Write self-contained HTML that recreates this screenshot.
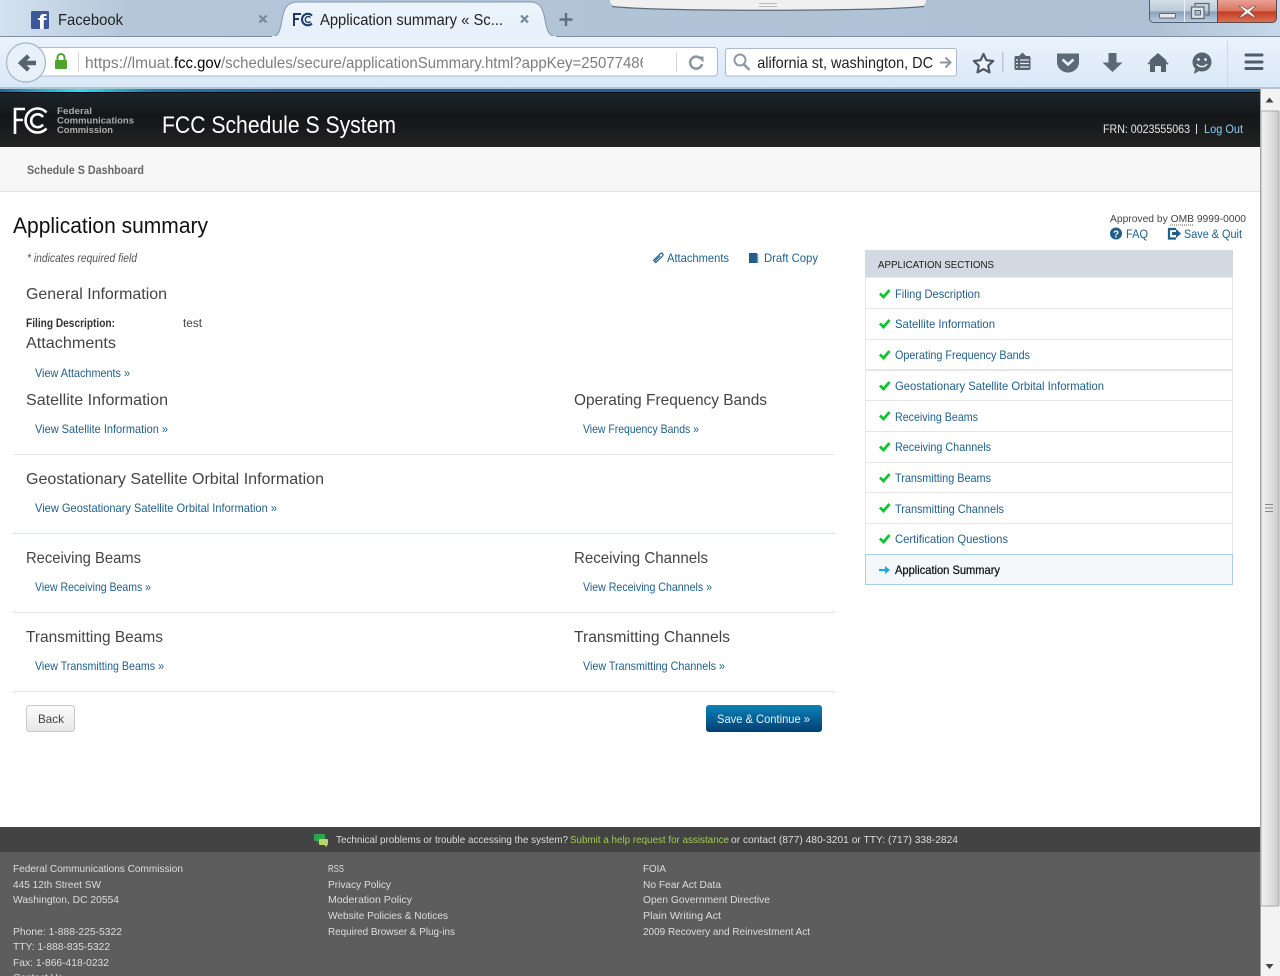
<!DOCTYPE html>
<html><head><meta charset="utf-8"><title>Application summary</title>
<style>
html,body{margin:0;padding:0;width:1280px;height:976px;overflow:hidden;background:#fff}
svg{display:block;position:absolute;left:0;top:0}
text{font-family:"Liberation Sans",sans-serif;white-space:pre}
.ui{fill:#222;font-size:16px}
.h{fill:#444;font-size:16px}
.l{fill:#1f5f8b;font-size:12px}
.f{fill:#ddd;font-size:10.5px}
</style></head><body>
<svg width="1280" height="976" viewBox="0 0 1280 976" xmlns="http://www.w3.org/2000/svg">
<defs>
<linearGradient id="tb" x1="0" x2="1" y1="0" y2="0"><stop offset="0" stop-color="#d3e2f0"/><stop offset=".1" stop-color="#b4c6d8"/><stop offset=".9" stop-color="#aec1d4"/><stop offset="1" stop-color="#c6d9ea"/></linearGradient>
<linearGradient id="nv" x1="0" x2="0" y1="0" y2="1"><stop offset="0" stop-color="#ebf3fc"/><stop offset="1" stop-color="#d9e7f6"/></linearGradient>
<linearGradient id="hd" x1="0" x2="0" y1="0" y2="1"><stop offset="0" stop-color="#1b252b"/><stop offset=".45" stop-color="#141617"/><stop offset="1" stop-color="#232323"/></linearGradient>
<linearGradient id="ln" x1="0" x2="1" y1="0" y2="0"><stop offset="0" stop-color="#1b6a90"/><stop offset=".03" stop-color="#2aa6c4"/><stop offset=".062" stop-color="#2de0f0"/><stop offset=".12" stop-color="#1f7fa6"/><stop offset=".22" stop-color="#1a6790"/><stop offset="1" stop-color="#1a6790"/></linearGradient>
<linearGradient id="btn" x1="0" x2="0" y1="0" y2="1"><stop offset="0" stop-color="#0a83b9"/><stop offset="1" stop-color="#023f73"/></linearGradient>
<linearGradient id="bk" x1="0" x2="0" y1="0" y2="1"><stop offset="0" stop-color="#fdfdfd"/><stop offset="1" stop-color="#e6e6e6"/></linearGradient>
<linearGradient id="min" x1="0" x2="0" y1="0" y2="1"><stop offset="0" stop-color="#d5e0ea"/><stop offset=".5" stop-color="#bccbd9"/><stop offset=".55" stop-color="#8ba2b8"/><stop offset="1" stop-color="#b9cde0"/></linearGradient>
<linearGradient id="cl" x1="0" x2="0" y1="0" y2="1"><stop offset="0" stop-color="#eda69b"/><stop offset=".5" stop-color="#d8735f"/><stop offset=".55" stop-color="#c43c22"/><stop offset="1" stop-color="#d9735a"/></linearGradient>
<linearGradient id="sb" x1="0" x2="1" y1="0" y2="0"><stop offset="0" stop-color="#f1f1f1"/><stop offset=".5" stop-color="#e2e2e2"/><stop offset="1" stop-color="#c9c9c9"/></linearGradient>
<linearGradient id="tab" x1="0" x2="0" y1="0" y2="1"><stop offset="0" stop-color="#edf4fb"/><stop offset="1" stop-color="#e6f0fb"/></linearGradient>
<clipPath id="uc"><rect x="80" y="48" width="563" height="28"/></clipPath>
<clipPath id="sc"><rect x="757" y="48" width="178" height="28"/></clipPath>
</defs>

<!-- browser chrome -->
<rect width="1280" height="37" fill="url(#tb)"/>
<rect y="36" width="1280" height="1" fill="#7890a6"/>
<rect y="37" width="1280" height="51" fill="url(#nv)"/>
<rect y="87" width="1280" height="2" fill="#b3c6d8"/>
<rect y="89" width="1280" height="3" fill="url(#ln)"/>
<rect y="92" width="1280" height="1" fill="#05090c"/>

<!-- tabs -->
<path d="M272 37C279 36 280 31 282 20 284 8 287 3 296 2H532C540 3 543 8 545 20 547 31 549 36 556 37Z" fill="url(#tab)" stroke="#8298ae"/>
<rect x="272" y="36" width="284" height="2" fill="#e8f1fb"/>
<rect x="31" y="11" width="18" height="18" rx="1.5" fill="#3b5998"/>
<text x="37.500" y="29" font-size="20" font-weight="700" fill="#fff" textLength="9" lengthAdjust="spacingAndGlyphs">f</text>
<text class="ui" x="58" y="25" textLength="65" lengthAdjust="spacingAndGlyphs">Facebook</text>
<path d="M259.500 15.500l7 7M266.500 15.500l-7 7" stroke="#77889a" stroke-width="2.200"/>
<g fill="none" stroke="#1d3a66" stroke-width="2"><path d="M294 26V14h7M294 19h5"/><path d="M312 15.500a5.800 5.800 0 1 0 0 8"/><path d="M310.500 17.500a3 3 0 1 0 0 4" stroke-width="1.400"/></g>
<text class="ui" x="320" y="25" textLength="183" lengthAdjust="spacingAndGlyphs">Application summary « Sc...</text>
<path d="M521 15.500l7 7M528 15.500l-7 7" stroke="#77889a" stroke-width="2.200"/>
<path d="M566 13v13M559.500 19.500h13" stroke="#5e7080" stroke-width="2.400"/>

<!-- tabs overflow grip -->
<path d="M610 0H926C926 4 924 6 920 7 870 11 660 11 618 7 612 6 610 4 610 0Z" fill="#f0f0f0"/>
<path d="M612 6.500C660 11.500 870 11.500 924 6.500" fill="none" stroke="#5f6c78" stroke-width="1.200"/>
<path d="M759 3.500h18M759 6.500h18" stroke="#bbb"/>

<!-- window controls -->
<path d="M1149.500 -1H1217.500V22.500H1153.500a4 4 0 0 1-4-4Z" fill="url(#min)" stroke="#4f6073"/>
<path d="M1184.500 0v22" stroke="#eef2f6"/>
<rect x="1159.500" y="13.500" width="16" height="4.500" rx="1" fill="#e8e8e8" stroke="#5b6b7a"/>
<path d="M1195 6V3.500h14V15h-3.500" fill="none" stroke="#5b6b7a" stroke-width="1.300"/>
<rect x="1191.500" y="7" width="12.500" height="11.500" fill="#dde4ea" stroke="#5b6b7a" stroke-width="1.300"/>
<rect x="1195" y="10.500" width="5.500" height="4.500" fill="#aebccb" stroke="#5b6b7a"/>
<path d="M1217.500 -1H1276.500V18.500a4 4 0 0 1-4 4H1217.500Z" fill="url(#cl)" stroke="#5e4a4a"/>
<path d="M1242 6l5.500 3.500 5.500-3.500h3l-6 5.500 6 5.500h-3l-5.500-3.500-5.500 3.500h-3l6-5.500-6-5.500Z" fill="#f2f2f2" stroke="#6c4a45" stroke-width=".6"/>

<!-- url bar -->
<path d="M30 47.500H714.500a3 3 0 0 1 3 3V73a3 3 0 0 1-3 3H30Z" fill="#fff" stroke="#a9bccf"/>
<circle cx="26" cy="62.500" r="19.500" fill="#e8f0f9" stroke="#a4b6c8" stroke-width="1.200"/>
<path d="M36 63H22M28.500 56l-7.500 7 7.500 7" fill="none" stroke="#55636f" stroke-width="4.400"/>
<rect x="55" y="60" width="12" height="9" rx="1" fill="#4fa42e"/>
<path d="M57.500 60v-2.500a3.500 3.500 0 0 1 7 0V60" fill="none" stroke="#4fa42e" stroke-width="2"/>
<rect x="78" y="52" width="1" height="20" fill="#cfd6dd"/>
<text x="85" y="68" font-size="16" fill="#7d7d7d" textLength="89" lengthAdjust="spacingAndGlyphs">https://lmuat.</text>
<text x="174" y="68" font-size="16" fill="#000" textLength="47" lengthAdjust="spacingAndGlyphs">fcc.gov</text>
<text x="221" y="68" font-size="16" fill="#7d7d7d" clip-path="url(#uc)" textLength="427" lengthAdjust="spacingAndGlyphs">/schedules/secure/applicationSummary.html?appKey=25077486</text>
<rect x="676" y="52" width="1" height="20" fill="#cfd6dd"/>
<path d="M700.500 58.500a6 6 0 1 0 1.500 5.500" fill="none" stroke="#8a97a3" stroke-width="2.600"/>
<path d="M697.500 56.500h6v6Z" fill="#8a97a3"/>

<!-- search bar -->
<rect x="725.500" y="48.500" width="231" height="27.500" rx="2" fill="#fff" stroke="#a9bccf"/>
<circle cx="740" cy="60" r="5.500" fill="none" stroke="#8e9aa6" stroke-width="2"/>
<path d="M744 64.500l5.500 5.500" stroke="#8e9aa6" stroke-width="2.600"/>
<text class="ui" x="750" y="68" clip-path="url(#sc)" textLength="183" lengthAdjust="spacingAndGlyphs">california st, washington, DC</text>
<path d="M940 62.500h9M945.500 57.500l5 5-5 5" fill="none" stroke="#8b99a6" stroke-width="2"/>

<!-- toolbar icons -->
<path d="M983.500 54l2.900 6.200 6.800.8-5 4.700 1.300 6.700-6-3.300-6 3.300 1.300-6.700-5-4.700 6.800-.8Z" fill="#eef4fb" stroke="#4a5965" stroke-width="2.200" stroke-linejoin="round"/>
<rect x="1002" y="52" width="1.500" height="20" fill="#b9c6d3"/>
<rect x="1014.500" y="56" width="16" height="14" rx="1.500" fill="#56646f"/>
<path d="M1019 56l3.500-3.500 3.500 3.500Z" fill="#56646f"/>
<path d="M1020 60h9M1020 63.500h9M1020 67h9M1016 60h2M1016 63.500h2M1016 67h2" stroke="#e4edf7" stroke-width="1.200"/>
<path d="M1057 53.500h22v8.500c0 6-5 10.500-11 10.500s-11-4.500-11-10.500Z" fill="#5b6a76"/>
<path d="M1062.500 59.500l5.500 5 5.500-5" fill="none" stroke="#e8f0f9" stroke-width="2.600"/>
<path d="M1108.500 53h8v9.500h6l-10 9.500-10-9.500h6Z" fill="#5b6a76"/>
<path d="M1158 54l-10.500 9.500.9 1.200 1.600-1.300V72h5v-6h6v6h5v-8.600l1.600 1.300.9-1.200Z" fill="#55636f"/>
<path d="M1150 61l8-7 8 7" fill="none" stroke="#55636f" stroke-width="1.500"/>
<circle cx="1202" cy="62" r="9.500" fill="#56646f"/>
<path d="M1195 69l-1 5 5-3Z" fill="#56646f"/>
<circle cx="1198.500" cy="59.500" r="1.400" fill="#e8f0f9"/><circle cx="1205.500" cy="59.500" r="1.400" fill="#e8f0f9"/>
<path d="M1197 64c2 3.500 8 3.500 10 0" fill="none" stroke="#e8f0f9" stroke-width="1.600"/>
<rect x="1227" y="40" width="1" height="46" fill="#ccd9e6"/>
<path d="M1246 55h16M1246 62h16M1246 68.500h16" stroke="#4e5c68" stroke-width="3" stroke-linecap="round"/>

<!-- site header -->
<rect y="93" width="1260" height="54" fill="url(#hd)"/>
<g fill="none" stroke="#fff" stroke-width="2.600"><path d="M15 134V109h10M15 120h8"/><path d="M46.500 112.500a12 12 0 1 0 0 16"/><path d="M43 117a6.500 6.500 0 1 0 0 7.500"/></g>
<text x="57" y="114" font-size="9.500" font-weight="700" fill="#aaa" textLength="35" lengthAdjust="spacingAndGlyphs">Federal</text>
<text x="57" y="123.500" font-size="9.500" font-weight="700" fill="#aaa" textLength="77" lengthAdjust="spacingAndGlyphs">Communications</text>
<text x="57" y="133" font-size="9.500" font-weight="700" fill="#aaa" textLength="56" lengthAdjust="spacingAndGlyphs">Commission</text>
<text x="162" y="133" font-size="24" fill="#fff" textLength="234" lengthAdjust="spacingAndGlyphs">FCC Schedule S System</text>
<text x="1103" y="133" font-size="11.500" fill="#e8e8e8" textLength="87" lengthAdjust="spacingAndGlyphs">FRN: 0023555063</text>
<rect x="1196" y="124" width="1" height="10" fill="#ddd"/>
<text x="1204" y="133" font-size="11.500" fill="#8fcbef" textLength="39" lengthAdjust="spacingAndGlyphs">Log Out</text>

<!-- nav strip -->
<rect y="147" width="1260" height="44" fill="#f7f7f7"/>
<rect y="191" width="1260" height="1" fill="#e3e3e3"/>
<text x="27" y="174" font-size="12" font-weight="700" fill="#666" textLength="117" lengthAdjust="spacingAndGlyphs">Schedule S Dashboard</text>

<!-- scrollbar -->
<rect x="1260" y="89" width="20" height="887" fill="#f3f3f3"/>
<rect x="1260" y="89" width="1" height="887" fill="#9c9c9c"/>
<rect x="1261" y="111" width="18" height="795" rx="1" fill="url(#sb)" stroke="#aaa"/>
<path d="M1265.500 102.500h8l-4-5Z" fill="#444"/>
<path d="M1265.500 964h8l-4 5Z" fill="#444"/>
<path d="M1265 504.500h8M1265 508h8M1265 511.500h8" stroke="#888"/>

<!-- main heading -->
<text x="13" y="233" font-size="22" fill="#111" textLength="195" lengthAdjust="spacingAndGlyphs">Application summary</text>
<text x="27" y="262" font-size="12" font-style="italic" fill="#555" textLength="110" lengthAdjust="spacingAndGlyphs">* indicates required field</text>

<path d="M653 262l7-7c2-2 4 .5 2.500 2l-6 6c-1 1-2.500 0-1.500-1l5-5" fill="none" stroke="#1f5f8b" stroke-width="1.200" transform="translate(0 -1)"/>
<text class="l" x="667" y="262" textLength="62" lengthAdjust="spacingAndGlyphs">Attachments</text>
<rect x="749" y="253" width="8" height="10" fill="#1f5f8b"/><rect x="757" y="254" width="1.500" height="9" fill="#7fa6c2"/>
<text class="l" x="764" y="262" textLength="54" lengthAdjust="spacingAndGlyphs">Draft Copy</text>

<text class="h" x="26" y="299" textLength="141" lengthAdjust="spacingAndGlyphs">General Information</text>
<text x="26" y="327" font-size="11.500" font-weight="700" fill="#333" textLength="89" lengthAdjust="spacingAndGlyphs">Filing Description:</text>
<text x="183" y="327" font-size="11.500" fill="#444" textLength="19" lengthAdjust="spacingAndGlyphs">test</text>
<text class="h" x="26" y="348" textLength="90" lengthAdjust="spacingAndGlyphs">Attachments</text>
<text class="l" x="35" y="377" textLength="95" lengthAdjust="spacingAndGlyphs">View Attachments »</text>

<text class="h" x="26" y="405" textLength="142" lengthAdjust="spacingAndGlyphs">Satellite Information</text>
<text class="l" x="35" y="433" textLength="133" lengthAdjust="spacingAndGlyphs">View Satellite Information »</text>
<text class="h" x="574" y="405" textLength="193" lengthAdjust="spacingAndGlyphs">Operating Frequency Bands</text>
<text class="l" x="583" y="433" textLength="116" lengthAdjust="spacingAndGlyphs">View Frequency Bands »</text>
<rect x="13" y="454" width="822" height="1" fill="#e3e9f1"/>

<text class="h" x="26" y="484" textLength="298" lengthAdjust="spacingAndGlyphs">Geostationary Satellite Orbital Information</text>
<text class="l" x="35" y="512" textLength="242" lengthAdjust="spacingAndGlyphs">View Geostationary Satellite Orbital Information »</text>
<rect x="13" y="533" width="822" height="1" fill="#e3e9f1"/>

<text class="h" x="26" y="563" textLength="115" lengthAdjust="spacingAndGlyphs">Receiving Beams</text>
<text class="l" x="35" y="591" textLength="116" lengthAdjust="spacingAndGlyphs">View Receiving Beams »</text>
<text class="h" x="574" y="563" textLength="134" lengthAdjust="spacingAndGlyphs">Receiving Channels</text>
<text class="l" x="583" y="591" textLength="129" lengthAdjust="spacingAndGlyphs">View Receiving Channels »</text>
<rect x="13" y="612" width="822" height="1" fill="#e3e9f1"/>

<text class="h" x="26" y="642" textLength="137" lengthAdjust="spacingAndGlyphs">Transmitting Beams</text>
<text class="l" x="35" y="670" textLength="129" lengthAdjust="spacingAndGlyphs">View Transmitting Beams »</text>
<text class="h" x="574" y="642" textLength="156" lengthAdjust="spacingAndGlyphs">Transmitting Channels</text>
<text class="l" x="583" y="670" textLength="142" lengthAdjust="spacingAndGlyphs">View Transmitting Channels »</text>
<rect x="13" y="691" width="822" height="1" fill="#e3e9f1"/>

<!-- buttons -->
<rect x="26.500" y="705.500" width="48" height="26" rx="3" fill="url(#bk)" stroke="#c9c9c9"/>
<text x="38" y="723" font-size="12" fill="#444" textLength="26" lengthAdjust="spacingAndGlyphs">Back</text>
<rect x="706" y="705" width="116" height="27" rx="3" fill="url(#btn)"/>
<text x="717" y="723" font-size="12" fill="#e6f2f8" textLength="93" lengthAdjust="spacingAndGlyphs">Save &amp; Continue »</text>

<!-- right top -->
<text x="1110" y="222" font-size="10.500" fill="#444" textLength="136" lengthAdjust="spacingAndGlyphs">Approved by OMB 9999-0000</text>
<path d="M1170 225h23" stroke="#666" stroke-dasharray="1 1"/>
<circle cx="1116" cy="233.500" r="6" fill="#1f5f8b"/>
<text x="1113" y="237.500" font-size="10" font-weight="700" fill="#fff">?</text>
<text x="1126" y="238" font-size="11.500" fill="#1f5f8b" textLength="22" lengthAdjust="spacingAndGlyphs">FAQ</text>
<path d="M1176 229h-7v9.500h7" fill="none" stroke="#1f5f8b" stroke-width="2.200"/>
<path d="M1172 232h4v-3l5 4.500-5 4.500v-3h-4Z" fill="#1f5f8b"/>
<text x="1184" y="238" font-size="11.500" fill="#1f5f8b" textLength="58" lengthAdjust="spacingAndGlyphs">Save &amp; Quit</text>

<!-- sections panel -->
<rect x="865" y="250" width="368" height="27.500" fill="#d2d9e1"/>
<path d="M865.500 277V585M1232.500 277V585" stroke="#e6e6e6"/>
<text x="878" y="268" font-size="10.500" fill="#1a1a1a" textLength="116" lengthAdjust="spacingAndGlyphs">APPLICATION SECTIONS</text>
<g fill="#e6e6e6">
<rect x="866" y="308" width="366" height="1"/><rect x="866" y="339" width="366" height="1"/><rect x="866" y="369" width="366" height="2"/><rect x="866" y="400" width="366" height="1"/><rect x="866" y="431" width="366" height="1"/><rect x="866" y="462" width="366" height="1"/><rect x="866" y="492" width="366" height="1"/><rect x="866" y="523" width="366" height="1"/>
</g>
<rect x="865.500" y="554.500" width="367" height="30" fill="#f4f8fb" stroke="#a9cfe4"/>
<g fill="none" stroke="#0fc52f" stroke-width="2.800" transform="translate(0 -1)">
<path d="M880 294.500l3.500 3.500 6-7"/><path d="M880 324.500l3.500 3.500 6-7"/><path d="M880 355.500l3.500 3.500 6-7"/><path d="M880 386.500l3.500 3.500 6-7"/><path d="M880 416.500l3.500 3.500 6-7"/><path d="M880 447.500l3.500 3.500 6-7"/><path d="M880 478.500l3.500 3.500 6-7"/><path d="M880 508.500l3.500 3.500 6-7"/><path d="M880 539.500l3.500 3.500 6-7"/>
</g>
<path d="M879 570h8" stroke="#17a9ef" stroke-width="2.200"/><path d="M885 566l5 4-5 4Z" fill="#17a9ef"/>
<g class="l">
<text class="l" x="895" y="298" textLength="85" lengthAdjust="spacingAndGlyphs">Filing Description</text>
<text class="l" x="895" y="328" textLength="100" lengthAdjust="spacingAndGlyphs">Satellite Information</text>
<text class="l" x="895" y="359" textLength="135" lengthAdjust="spacingAndGlyphs">Operating Frequency Bands</text>
<text class="l" x="895" y="390" textLength="209" lengthAdjust="spacingAndGlyphs">Geostationary Satellite Orbital Information</text>
<text class="l" x="895" y="421" textLength="83" lengthAdjust="spacingAndGlyphs">Receiving Beams</text>
<text class="l" x="895" y="451" textLength="96" lengthAdjust="spacingAndGlyphs">Receiving Channels</text>
<text class="l" x="895" y="482" textLength="96" lengthAdjust="spacingAndGlyphs">Transmitting Beams</text>
<text class="l" x="895" y="513" textLength="109" lengthAdjust="spacingAndGlyphs">Transmitting Channels</text>
<text class="l" x="895" y="543" textLength="113" lengthAdjust="spacingAndGlyphs">Certification Questions</text>
</g>
<text x="895" y="574" font-size="12" fill="#111" stroke="#111" stroke-width=".25" textLength="105" lengthAdjust="spacingAndGlyphs">Application Summary</text>

<!-- footer -->
<rect y="827" width="1260" height="25" fill="#434343"/>
<rect y="852" width="1260" height="124" fill="#5d5d5d"/>
<path d="M315 834h9a1 1 0 0 1 1 1v5a1 1 0 0 1-1 1h-5l-2 2v-2h-2a1 1 0 0 1-1-1v-5a1 1 0 0 1 1-1Z" fill="#2fa34a"/>
<path d="M320 839h7a1 1 0 0 1 1 1v4a1 1 0 0 1-1 1v2l-3-2h-4a1 1 0 0 1-1-1v-4a1 1 0 0 1 1-1Z" fill="#b7d76b"/>
<text class="f" x="336" y="843" textLength="232" lengthAdjust="spacingAndGlyphs">Technical problems or trouble accessing the system?</text>
<text class="f" x="570" y="843" style="fill:#9fcb4f" textLength="159" lengthAdjust="spacingAndGlyphs">Submit a help request for assistance</text>
<text class="f" x="731" y="843" textLength="227" lengthAdjust="spacingAndGlyphs">or contact (877) 480-3201 or TTY: (717) 338-2824</text>

<text class="f" x="13" y="872" textLength="170" lengthAdjust="spacingAndGlyphs">Federal Communications Commission</text>
<text class="f" x="13" y="888" textLength="88" lengthAdjust="spacingAndGlyphs">445 12th Street SW</text>
<text class="f" x="13" y="903" textLength="106" lengthAdjust="spacingAndGlyphs">Washington, DC 20554</text>
<text class="f" x="13" y="935" textLength="109" lengthAdjust="spacingAndGlyphs">Phone: 1-888-225-5322</text>
<text class="f" x="13" y="950" textLength="97" lengthAdjust="spacingAndGlyphs">TTY: 1-888-835-5322</text>
<text class="f" x="13" y="966" textLength="96" lengthAdjust="spacingAndGlyphs">Fax: 1-866-418-0232</text>
<text class="f" x="13" y="981" textLength="50" lengthAdjust="spacingAndGlyphs">Contact Us</text>

<text class="f" x="328" y="872" textLength="16" lengthAdjust="spacingAndGlyphs">RSS</text>
<text class="f" x="328" y="888" textLength="63" lengthAdjust="spacingAndGlyphs">Privacy Policy</text>
<text class="f" x="328" y="903" textLength="84" lengthAdjust="spacingAndGlyphs">Moderation Policy</text>
<text class="f" x="328" y="919" textLength="120" lengthAdjust="spacingAndGlyphs">Website Policies &amp; Notices</text>
<text class="f" x="328" y="935" textLength="127" lengthAdjust="spacingAndGlyphs">Required Browser &amp; Plug-ins</text>

<text class="f" x="643" y="872" textLength="23" lengthAdjust="spacingAndGlyphs">FOIA</text>
<text class="f" x="643" y="888" textLength="78" lengthAdjust="spacingAndGlyphs">No Fear Act Data</text>
<text class="f" x="643" y="903" textLength="127" lengthAdjust="spacingAndGlyphs">Open Government Directive</text>
<text class="f" x="643" y="919" textLength="78" lengthAdjust="spacingAndGlyphs">Plain Writing Act</text>
<text class="f" x="643" y="935" textLength="167" lengthAdjust="spacingAndGlyphs">2009 Recovery and Reinvestment Act</text>
</svg>
</body></html>
